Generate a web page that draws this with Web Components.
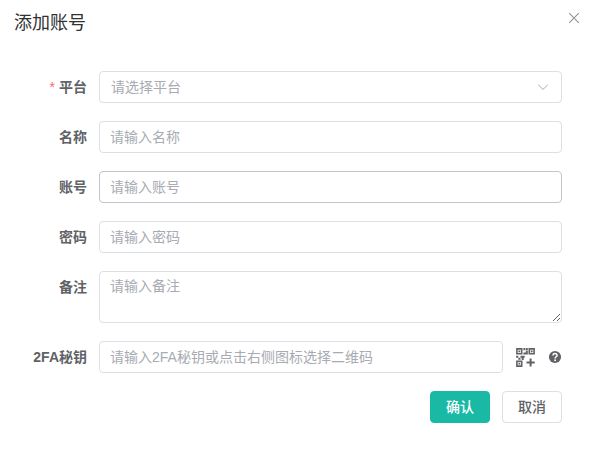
<!DOCTYPE html>
<html lang="zh-CN">
<head>
<meta charset="utf-8">
<title>添加账号</title>
<style>
body { margin: 0; background: #fff; color: #606266; font: 14px/20px "Liberation Sans", "Noto Sans CJK SC", sans-serif; }
</style>
</head>
<body>
<account-dialog heading="添加账号">
  <form-field kind="select" label="平台" placeholder="请选择平台" required></form-field>
  <form-field label="名称" placeholder="请输入名称"></form-field>
  <form-field label="账号" placeholder="请输入账号" active></form-field>
  <form-field kind="password" label="密码" placeholder="请输入密码"></form-field>
  <form-field kind="textarea" label="备注" placeholder="请输入备注"></form-field>
  <form-field label="2FA秘钥" placeholder="请输入2FA秘钥或点击右侧图标选择二维码">
    <icon-button slot="extra" name="qr" label="选择二维码"></icon-button>
    <icon-button slot="extra" name="help" label="帮助"></icon-button>
  </form-field>
  <action-button slot="actions" primary>确认</action-button>
  <action-button slot="actions">取消</action-button>
</account-dialog>

<template id="dialog-template">
  <style>
    :host { display: block; }
    header { display: flex; justify-content: space-between; align-items: flex-start; padding: 10px 13px 0 14px; }
    h1 { margin: 0; font-size: 18px; line-height: 26px; font-weight: 400; color: #303133; }
    form { display: flex; flex-direction: column; gap: 18px; padding: 35px 32px 0 14px; }
    footer { display: flex; justify-content: flex-end; gap: 12px; }
  </style>
  <header><h1></h1><icon-button name="close" label="关闭"></icon-button></header>
  <form>
    <slot></slot>
    <footer><slot name="actions"></slot></footer>
  </form>
</template>

<template id="field-template">
  <style>
    :host { display: grid; grid-template-columns: 73px minmax(0, 1fr) auto; column-gap: 12px; align-items: start; }
    label { text-align: right; line-height: 32px; font-weight: 700; color: #606266; white-space: nowrap; }
    :host([required]) label::before { content: "*"; color: #f56c6c; margin-right: 4px; font-weight: 400; }
    .control { position: relative; display: flex; }
    input, select, textarea {
      box-sizing: border-box; width: 100%; height: 32px; margin: 0; padding: 0 10px;
      border: 1px solid #dcdfe6; border-radius: 4px; background: #fff; outline: none;
      font: inherit; color: #606266; appearance: none;
    }
    select { color: #a8abb2; padding: 0 32px 0 11px; }
    textarea { height: 52px; padding: 4px 10px; resize: vertical; display: block; }
    :host([active]) input { border-color: #c0c4cc; }
    input:focus, select:focus, textarea:focus { border-color: #1ab9a5; }
    ::placeholder { color: #a8abb2; opacity: 1; }
    svg { position: absolute; right: 12px; top: 9px; width: 14px; height: 14px; pointer-events: none; }
    .extra { display: flex; align-items: center; gap: 13px; height: 32px; }
    .extra[hidden] { display: none; }
    :host(:not([extras])) .control { grid-column: 2 / 4; }
  </style>
  <label for="control"></label>
  <div class="control"></div>
  <div class="extra"><slot name="extra"></slot></div>
</template>

<script>
const icons = {
  close: [14, '<path d="M2.2 2.2 11.8 11.8M11.8 2.2 2.2 11.8" fill="none" stroke="#909399" stroke-width="1.1"/>'],
  help: [14, '<circle cx="7" cy="7" r="6.1" fill="#606266"/><path d="M5 5.6C5 2.9 9.1 3 9.1 5.4 9.1 6.8 7.1 6.7 7.1 8.4" fill="none" stroke="#fff" stroke-width="1.5"/><circle cx="7.1" cy="10.2" r=".95" fill="#fff"/>'],
  qr: [20, '<g fill="none" stroke="#606266" stroke-width="1.6"><path d="M1.9 1.9H6.7V6.7H1.9ZM14.3 1.9H19.1V6.7H14.3ZM1.9 14.3H6.7V19.1H1.9Z"/></g><g fill="#606266"><path d="M3.4 3.4h1.8v1.8H3.4ZM15.8 3.4h1.8v1.8h-1.8ZM3.4 15.8h1.8v1.8H3.4ZM8.4 1.1h2v2.2H8.4ZM11 1.1h1.8v1.8H11ZM10.8 3.6h2v3.8H8.4V5.4h2.4ZM1.1 8.8h2.2v2H1.1ZM3.3 10.8h2.2v2H3.3ZM5.5 8.8h4.2v2h-1v2.2H6.7v-2.2H5.5Z"/><path d="M14.6 11.4h2v3.1h3.1v2h-3.1v3.1h-2v-3.1h-3.1v-2h3.1Z"/></g>']
};

customElements.define('icon-button', class extends HTMLElement {
  connectedCallback() {
    if (this.shadowRoot) return;
    const [size, shape] = icons[this.getAttribute('name')];
    this.attachShadow({ mode: 'open' }).innerHTML = `
      <style>
        :host { display: block; }
        button { display: block; border: 0; padding: 0; margin: 0; background: none; cursor: pointer; }
        :host([name="close"]) button { padding: 1px 0 0; }
        svg { display: block; }
      </style>
      <button type="button" aria-label="${this.getAttribute('label')}">
        <svg width="${size}" height="${size}" viewBox="0 0 ${size} ${size}" aria-hidden="true">${shape}</svg>
      </button>`;
  }
});

customElements.define('action-button', class extends HTMLElement {
  connectedCallback() {
    if (this.shadowRoot) return;
    this.attachShadow({ mode: 'open' }).innerHTML = `
      <style>
        :host { display: block; }
        button { box-sizing: border-box; height: 32px; padding: 0 15px; border: 1px solid #dcdfe6; border-radius: 4px;
          background: #fff; color: #606266; font: inherit; font-weight: 500; cursor: pointer; display: block; }
        :host([primary]) button { background: #1ab9a5; border-color: #1ab9a5; color: #fff; }
      </style>
      <button type="button"><slot></slot></button>`;
  }
});

customElements.define('form-field', class extends HTMLElement {
  connectedCallback() {
    if (this.shadowRoot) return;
    const root = this.attachShadow({ mode: 'open' });
    root.append(document.getElementById('field-template').content.cloneNode(true));
    const kind = this.getAttribute('kind') || 'text';
    const hint = this.getAttribute('placeholder');
    root.querySelector('label').textContent = this.getAttribute('label');
    const box = root.querySelector('.control');
    if (kind === 'select') {
      box.innerHTML = `<select id="control"><option value="">${hint}</option></select>
        <svg viewBox="0 0 14 14" aria-hidden="true"><path d="M2.2 4.8 7 9.4 11.8 4.8" fill="none" stroke="#a8abb2" stroke-width="1"/></svg>`;
    } else if (kind === 'textarea') {
      box.innerHTML = `<textarea id="control" rows="2" placeholder="${hint}"></textarea>`;
    } else {
      box.innerHTML = `<input id="control" type="${kind}" placeholder="${hint}">`;
    }
    const extras = this.querySelector('[slot="extra"]') !== null;
    this.toggleAttribute('extras', extras);
    root.querySelector('.extra').hidden = !extras;
  }
});

customElements.define('account-dialog', class extends HTMLElement {
  connectedCallback() {
    if (this.shadowRoot) return;
    const root = this.attachShadow({ mode: 'open' });
    root.append(document.getElementById('dialog-template').content.cloneNode(true));
    root.querySelector('h1').textContent = this.getAttribute('heading');
  }
});
</script>
</body>
</html>
